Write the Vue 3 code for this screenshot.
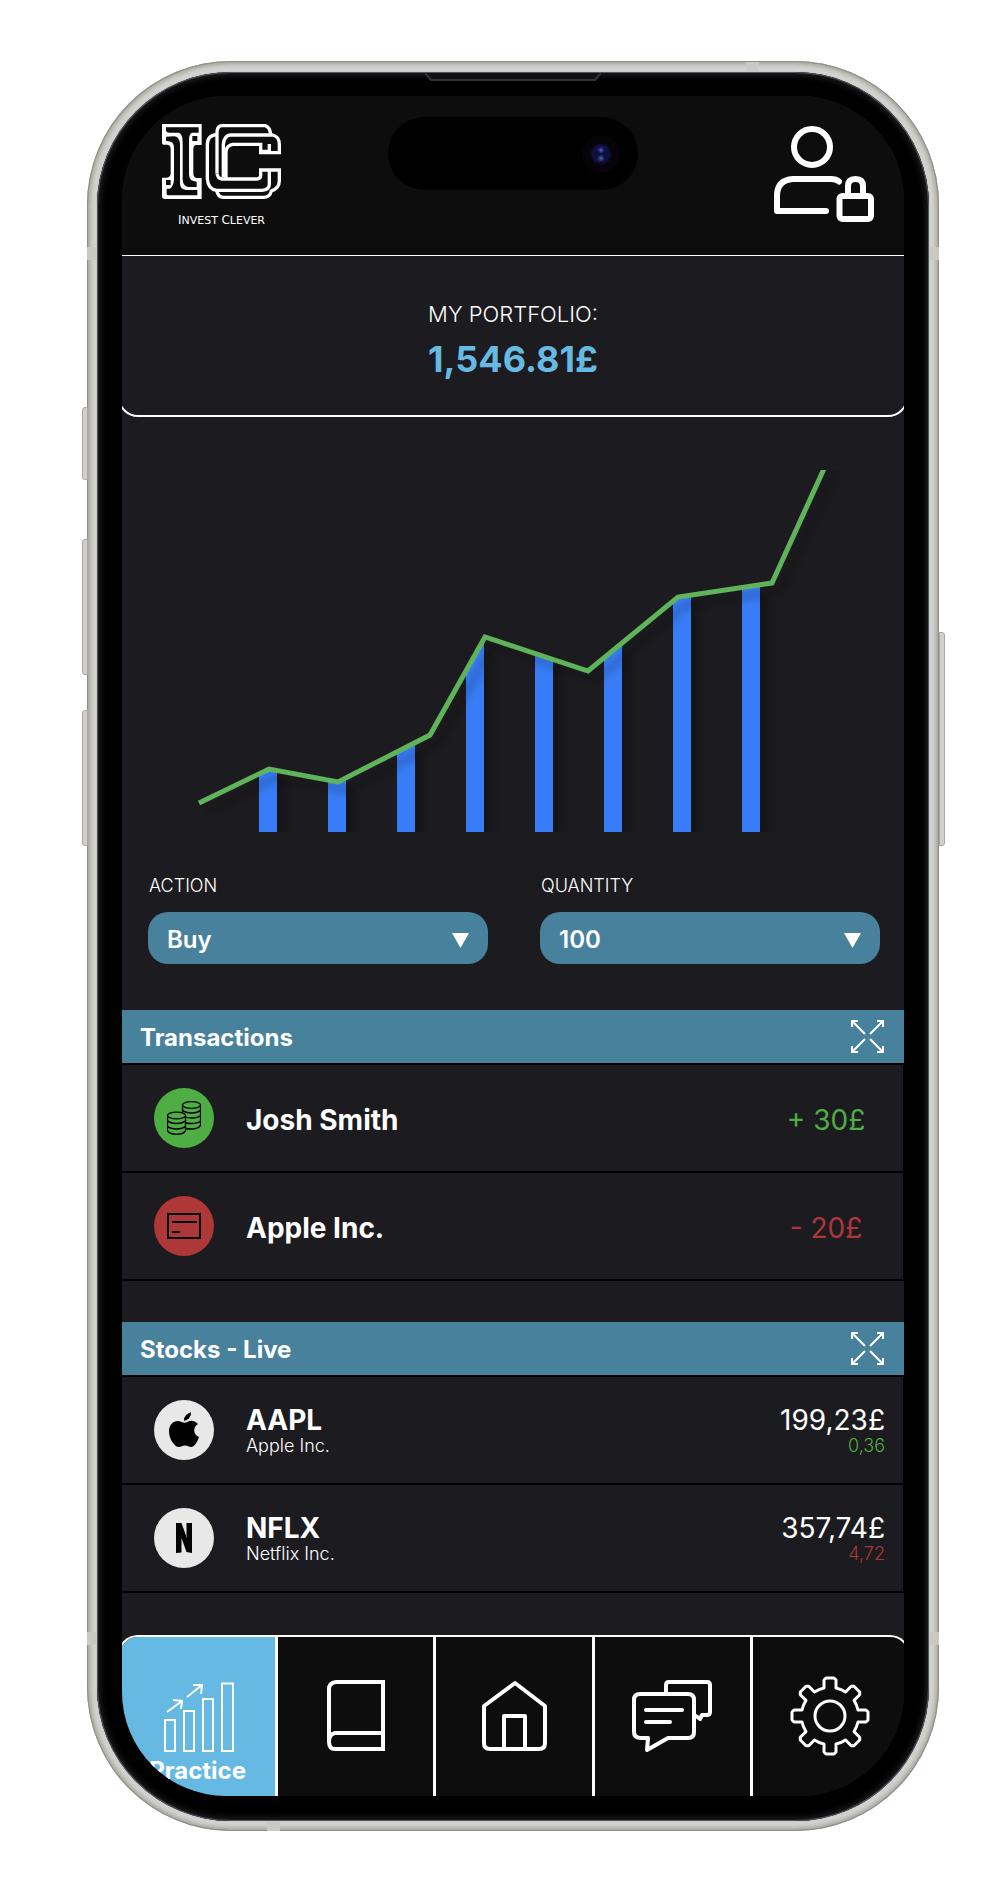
<script setup>
import { ref } from 'vue'

const action = ref('Buy')
const quantity = ref('100')
const activeTab = ref('practice')

const transactions = [
  { name: 'Josh Smith', amount: '+ 30£', kind: 'gain', icon: 'coins' },
  { name: 'Apple Inc.', amount: '- 20£', kind: 'loss', icon: 'card' },
]

const stocks = [
  { symbol: 'AAPL', company: 'Apple Inc.', price: '199,23£', change: '0,36', kind: 'gain' },
  { symbol: 'NFLX', company: 'Netflix Inc.', price: '357,74£', change: '4,72', kind: 'loss' },
]

const tabs = [
  { id: 'practice', label: 'Practice' },
  { id: 'learn', label: 'Learn' },
  { id: 'home', label: 'Home' },
  { id: 'chat', label: 'Chat' },
  { id: 'settings', label: 'Settings' },
]

const trend = [[77, 333], [147, 299], [216, 312], [308, 265], [363, 167], [466, 201], [556, 127], [650, 113], [706, -10]]
const trendPoints = trend.map((p) => p.join(',')).join(' ')
const areaPoints = `${trendPoints} 706,362 77,362`
const bars = Array.from({ length: 8 }, (_, i) => 137 + i * 69)

// Eight-toothed cog: each tooth is rotated around the centre of an 80 unit box
function cogPath() {
  const tooth = [[-6, -28], [-6, -36], [-4, -38], [4, -38], [6, -36], [6, -28]]
  let d = ''
  for (let k = 0; k < 8; k++) {
    const a = (k * Math.PI) / 4
    tooth.forEach(([x, y], i) => {
      const px = (40 + x * Math.cos(a) - y * Math.sin(a)).toFixed(1)
      const py = (40 + x * Math.sin(a) + y * Math.cos(a)).toFixed(1)
      if (k === 0 && i === 0) d += `M${px} ${py}`
      else if (i === 0) d += `A29 29 0 0 1 ${px} ${py}`
      else d += `L${px} ${py}`
    })
  }
  return d + 'A29 29 0 0 1 34 12Z'
}
const cog = cogPath()
</script>

<template>
  <div class="page">
    <div class="phone">
      <span class="side-key key-mute"></span>
      <span class="side-key key-up"></span>
      <span class="side-key key-down"></span>
      <span class="side-key key-power"></span>
      <span class="band band-left-top"></span>
      <span class="band band-right-top"></span>
      <span class="band band-left-bottom"></span>
      <span class="band band-right-bottom"></span>
      <span class="band band-top"></span>
      <span class="band band-bottom"></span>

      <div class="bezel">
        <svg class="speaker" viewBox="0 0 176 9" aria-hidden="true">
          <path d="M0 0 L6 7 H170 L176 0Z" fill="#101010" />
          <path d="M0 0 L6 7 H170 L176 0" fill="none" stroke="#333" stroke-width="2" />
        </svg>
        <div class="screen">
          <div class="island"><span class="camera"></span></div>

          <header class="top-bar">
            <a class="brand" href="#">
              <svg class="brand-mark" viewBox="36 42 357 225" aria-hidden="true">
                <path fill="#fff" fill-rule="evenodd" d="M36 42H155V105H138Q130 106 130 118V190Q130 203 140 204H155V267H44Q36 266 36 258V203H50Q62 202 62 190V118Q62 105 52 104H40Q36 103 36 98Z M48 52V62Q50 68 58 68H86Q98 72 98 95V210Q100 230 116 231H140V215Q118 214 117 195V90Q117 70 126 68H146V52Z M48 80V93Q72 92 72 112V205Q72 228 60 236H50V252Q50 256 56 256H142V240H108Q91 238 90 222V102Q88 80 72 79Z M127 78H142V93H127Z M48 210H62V225H48Z" />
                <g fill="none" stroke="#fff" stroke-width="10">
                  <path d="M201 190V64Q202 48 216 47H346Q360 52 362 74" />
                  <path d="M200 74Q172 76 172 104V206Q174 238 200 241H336Q358 240 358 222V180" />
                  <path d="M200 241Q204 262 220 262H340Q360 262 364 243Q388 234 388 212V180H332V196Q332 207 320 207H216Q203 206 201 190" />
                  <path d="M220 202V104Q222 76 242 75H368Q388 80 388 102V128H332V103H248Q230 106 228 124V206" />
                  <path d="M332 124H358V102" />
                </g>
              </svg>
              <span class="brand-name"><span class="cap">I</span>nvest <span class="cap">C</span>lever</span>
            </a>
            <button class="icon-button" type="button" aria-label="Account security">
              <svg class="user-icon" viewBox="0 0 100 96" fill="none" stroke="#fff" stroke-width="6" stroke-linecap="round" stroke-linejoin="round">
                <circle cx="38" cy="21" r="18" />
                <path d="M65 55.500Q62 53 57 53H19Q3 54 3 70V85H52" />
                <rect x="65.500" y="70" width="31.500" height="23" rx="3" />
                <path d="M74 69V60Q74 53 81.500 53T89 60V69" />
              </svg>
            </button>
          </header>

          <section class="portfolio">
            <h1 class="portfolio-title">MY PORTFOLIO:</h1>
            <p class="portfolio-value">1,546.81£</p>
          </section>

          <svg class="chart" viewBox="0 0 782 362" role="img" aria-label="Portfolio growth">
            <defs>
              <clipPath id="under-trend"><polygon :points="areaPoints" /></clipPath>
              <filter id="chart-shadow" filterUnits="userSpaceOnUse" x="0" y="-20" width="782" height="400">
                <feDropShadow dx="8" dy="8" stdDeviation="5" flood-color="#000" flood-opacity="0.3" />
              </filter>
            </defs>
            <g filter="url(#chart-shadow)">
              <g clip-path="url(#under-trend)">
                <rect v-for="x in bars" :key="x" :x="x" y="0" width="18" height="362" fill="#377df7" />
              </g>
            </g>
            <polyline :points="trendPoints" fill="none" stroke="#5fb35a" stroke-width="5" filter="url(#chart-shadow)" />
          </svg>

          <form class="order" @submit.prevent>
            <div class="field">
              <label for="action">ACTION</label>
              <div class="select-box">
                <select id="action" v-model="action">
                  <option>Buy</option>
                  <option>Sell</option>
                </select>
                <svg class="caret" viewBox="0 0 17 15" aria-hidden="true"><path d="M0 0H17L8.500 15Z" fill="#fff" /></svg>
              </div>
            </div>
            <div class="field">
              <label for="quantity">QUANTITY</label>
              <div class="select-box">
                <select id="quantity" v-model="quantity">
                  <option>100</option>
                  <option>200</option>
                </select>
                <svg class="caret" viewBox="0 0 17 15" aria-hidden="true"><path d="M0 0H17L8.500 15Z" fill="#fff" /></svg>
              </div>
            </div>
          </form>

          <section class="panel">
            <div class="panel-head">
              <h2>Transactions</h2>
              <button class="icon-button" type="button" aria-label="Expand transactions">
                <svg class="expand" viewBox="0 0 33 33" fill="none" stroke="#fff" stroke-width="2">
                  <path d="M1 7V1H7M1 1L14 14M26 1H32V7M32 1L19 14M1 26V32H7M1 32L14 19M26 32H32V26M32 32L19 19" />
                </svg>
              </button>
            </div>
            <ul>
              <li v-for="t in transactions" :key="t.name" class="row">
                <span class="badge" :class="t.kind">
                  <svg v-if="t.icon === 'coins'" width="34" height="34" viewBox="0 0 34 34" fill="none" stroke="#000" stroke-width="1.300">
                    <ellipse cx="24.500" cy="4" rx="9" ry="3.300" />
                    <path d="M15.500 4V12M33.500 4V24.500Q31 28 24.500 28Q21 28 19 27.500M15.500 9Q18 12 24.500 12T33.500 9M18 16Q20 17 24.500 17Q31 17 33.500 14.500M19 22Q21 22.500 24.500 22.500Q31 22.500 33.500 20" />
                    <ellipse cx="9.500" cy="14.500" rx="9" ry="3.300" />
                    <path d="M.5 14.500V30Q3 33.300 9.500 33.300T18.500 30V14.500M.5 19.500Q3 22.500 9.500 22.500T18.500 19.500M.5 25Q3 28 9.500 28T18.500 25" />
                  </svg>
                  <svg v-else width="36" height="26" viewBox="0 0 36 26" fill="none" stroke="#000" stroke-width="2">
                    <path d="M2 1H34V25H2ZM6 9H31M6 19H14" />
                  </svg>
                </span>
                <span class="name">{{ t.name }}</span>
                <span class="amount" :class="t.kind">{{ t.amount }}</span>
              </li>
            </ul>
          </section>

          <section class="panel">
            <div class="panel-head">
              <h2>Stocks - Live</h2>
              <button class="icon-button" type="button" aria-label="Expand stocks">
                <svg class="expand" viewBox="0 0 33 33" fill="none" stroke="#fff" stroke-width="2">
                  <path d="M1 7V1H7M1 1L14 14M26 1H32V7M32 1L19 14M1 26V32H7M1 32L14 19M26 32H32V26M32 32L19 19" />
                </svg>
              </button>
            </div>
            <ul>
              <li v-for="s in stocks" :key="s.symbol" class="row">
                <span class="badge">
                  <svg v-if="s.symbol === 'AAPL'" width="30" height="36" viewBox="0 0 30 36" fill="#000">
                    <path d="M22 .2Q22.500 3.500 20 6.200T15 8.600Q14.800 5.400 17.200 3T22 .2Z" />
                    <path d="M29 12C26.500 13.500 25.200 15.600 25.200 18.300C25.200 21.500 27.200 24 30 25C28.600 29 25.800 35 22 35C19.500 35 19 33.500 16 33.500S12.300 35 10 35C5.500 35 0 27 0 19.500C0 12.800 4.300 9 8.700 9C11.600 9 13.700 10.800 15.600 10.800C17.400 10.800 19.700 8.800 23 8.800Q26.800 9 29 12Z" />
                  </svg>
                  <svg v-else width="16" height="30" viewBox="0 0 16 30" fill="#000">
                    <path d="M0 0H5.500L10.500 14V0H16V30L10.500 29L5.500 15V29.400L0 30Z" />
                  </svg>
                </span>
                <span class="pair">
                  <strong>{{ s.symbol }}</strong>
                  <small>{{ s.company }}</small>
                </span>
                <span class="pair pair-end">
                  <span class="price">{{ s.price }}</span>
                  <small :class="s.kind">{{ s.change }}</small>
                </span>
              </li>
            </ul>
          </section>

          <nav class="tabs">
            <button
              v-for="tab in tabs"
              :key="tab.id"
              class="tab"
              :class="{ active: tab.id === activeTab }"
              type="button"
              :aria-label="tab.label"
              @click="activeTab = tab.id"
            >
              <svg class="tab-icon" viewBox="0 0 80 80" fill="none" stroke="#fff" stroke-width="4">
                <g v-if="tab.id === 'practice'" stroke-width="2">
                  <path d="M7 44H17V75H7ZM26 35H36V75H26ZM45 23H55V75H45ZM64 7.500H75V75H64Z" />
                  <path d="M9 36L24 25M15 24L24 25L23 33M29 21L44 9M35 9L44 9L43 18" />
                </g>
                <path v-else-if="tab.id === 'learn'" d="M67 57H19Q13 58 13 65.500T19 73H67V6H20Q13 7 13 13V65" />
                <path v-else-if="tab.id === 'home'" stroke-linejoin="round" d="M10 30L41 7L71 30V67Q71 73 65 73H16Q10 73 10 67ZM30 73V40H51V73" />
                <g v-else-if="tab.id === 'chat'" stroke-linejoin="round" stroke-linecap="round">
                  <path d="M8 18H56Q62 18 62 24V56Q62 62 56 62H36L15 74L16 62H9Q2 62 2 56V24Q2 18 8 18Z" />
                  <path d="M34 17V9Q34 6 37 6H75Q78 6 78 9V36Q78 39 75 39H70L68 43L64 40M14 34H50M14 46H38" />
                </g>
                <g v-else stroke-width="3" stroke-linejoin="round">
                  <circle cx="40" cy="40" r="15" />
                  <path :d="cog" />
                </g>
              </svg>
              <span v-if="tab.id === activeTab" class="tab-label">{{ tab.label }}</span>
            </button>
          </nav>
        </div>
      </div>
    </div>
  </div>
</template>

<style>
body {
  margin: 0;
  background: #fff;
}
</style>

<style scoped>
* {
  box-sizing: border-box;
}

.page {
  padding: 61px 69px 69px 87px;
  font-family: Inter, "Liberation Sans", sans-serif;
  color: #fff;
}

h1,
h2,
p,
ul {
  margin: 0;
  padding: 0;
}

ul {
  list-style: none;
}

.phone {
  position: relative;
  padding: 11px 10px 10px;
  border-radius: 144px;
  background: #d2d2ce;
  box-shadow:
    inset 0 0 0 1px #8f8d87,
    inset 0 0 4px 3px #a3a19b;
}

.side-key {
  position: absolute;
  width: 6px;
  border: 1px solid #aaa8a2;
  background: #d3d0c9;
  left: -5px;
  border-radius: 3px 0 0 3px;
}

.key-mute {
  top: 346px;
  height: 73px;
}

.key-up {
  top: 478px;
  height: 136px;
}

.key-down {
  top: 649px;
  height: 136px;
}

.key-power {
  top: 571px;
  height: 214px;
  left: auto;
  right: -6px;
  border-radius: 0 3px 3px 0;
}

.band {
  position: absolute;
  background: #c9c8c2;
}

.band-left-top,
.band-right-top,
.band-left-bottom,
.band-right-bottom {
  width: 10px;
  height: 13px;
}

.band-left-top {
  left: 0;
  top: 186px;
}

.band-right-top {
  right: 0;
  top: 186px;
}

.band-left-bottom {
  left: 0;
  bottom: 186px;
}

.band-right-bottom {
  right: 0;
  bottom: 186px;
}

.band-top,
.band-bottom {
  width: 13px;
  height: 10px;
}

.band-top {
  top: 1px;
  right: 180px;
}

.band-bottom {
  bottom: 0;
  left: 180px;
}

.bezel {
  position: relative;
  padding: 24px 25px 25px;
  border-radius: 134px;
  background: #000;
  box-shadow:
    0 0 0 1px #c3cad4,
    inset 0 0 0 1px #55565a,
    inset 0 0 6px 3px #222223;
}

.speaker {
  position: absolute;
  top: 1px;
  left: 50%;
  width: 176px;
  height: 9px;
  margin-left: -88px;
}

.screen {
  position: relative;
  overflow: hidden;
  border-radius: 104px;
  background: #1c1b1f;
}

.island {
  position: absolute;
  top: 21px;
  left: 50%;
  display: flex;
  align-items: center;
  justify-content: flex-end;
  width: 250px;
  height: 73px;
  margin-left: -125px;
  padding-right: 18px;
  border-radius: 37px;
  background: #000;
}

.camera {
  width: 38px;
  height: 38px;
  border-radius: 50%;
  background:
    radial-gradient(circle at 50% 40%, #6a62c4 0, #2b2a7a 2px, transparent 4px),
    radial-gradient(circle at 50% 61%, #3e74a0 0, #1d3a6a 2px, transparent 4px),
    radial-gradient(circle, #0a0a30 0, #101044 8px, #0a0a20 10px, #060408 11px);
}

.top-bar {
  display: flex;
  align-items: flex-start;
  justify-content: space-between;
  height: 160px;
  padding: 28px 30px 0 40px;
  border-bottom: 1px solid #fff;
  background: #0d0d0d;
}

.brand {
  display: flex;
  flex-direction: column;
  align-items: center;
  gap: 13px;
  color: #fff;
  text-decoration: none;
}

.brand-mark {
  width: 119px;
  height: 75px;
}

.brand-name {
  font: 11px/16px "DejaVu Sans", sans-serif;
  text-transform: uppercase;
}

.brand-name .cap {
  font-size: 12px;
}

.icon-button {
  display: block;
  padding: 0;
  border: 0;
  background: none;
  cursor: pointer;
}

.icon-button svg {
  display: block;
}

.user-icon {
  width: 100px;
  height: 96px;
  margin-top: 2px;
}

.portfolio {
  margin: 0 -4px;
  padding: 44px 0 34px;
  border: 2px solid #fff;
  border-top: 0;
  border-radius: 0 0 20px 20px;
  text-align: center;
}

.portfolio-title {
  margin-bottom: 9px;
  font-size: 22px;
  font-weight: 300;
  line-height: 28px;
}

.portfolio-value {
  font-size: 36px;
  font-weight: 700;
  line-height: 44px;
  color: #66b9e2;
}

.chart {
  display: block;
  width: 100%;
  margin-top: 53px;
}

.order {
  display: flex;
  gap: 52px;
  padding: 42px 24px 46px 26px;
}

.field {
  flex: 1;
  min-width: 0;
}

.field label {
  display: block;
  margin-bottom: 14px;
  padding-left: 1px;
  font-size: 18px;
  font-weight: 300;
  line-height: 24px;
}

.select-box {
  position: relative;
}

.select-box select {
  display: block;
  width: 100%;
  height: 52px;
  padding: 4px 19px 0;
  border: 0;
  border-radius: 20px;
  appearance: none;
  background: #48819c;
  color: #fff;
  font: 600 24px/30px Inter, "Liberation Sans", sans-serif;
}

.caret {
  position: absolute;
  top: 21px;
  right: 19px;
  width: 17px;
  height: 15px;
  pointer-events: none;
}

.panel {
  margin-bottom: 41px;
}

.panel-head {
  display: flex;
  align-items: center;
  justify-content: space-between;
  height: 55px;
  padding: 0 20px 0 18px;
  border-bottom: 2px solid #000;
  background: #48819c;
}

.panel-head h2 {
  padding-top: 2px;
  font-size: 24px;
  font-weight: 700;
  line-height: 30px;
}

.expand {
  width: 33px;
  height: 33px;
}

.row {
  display: flex;
  align-items: center;
  height: 108px;
  padding: 0 18px 0 32px;
  border-right: 1px solid #000;
  border-bottom: 2px solid #000;
}

.badge {
  display: flex;
  align-items: center;
  justify-content: center;
  width: 60px;
  height: 60px;
  margin-right: 32px;
  border-radius: 50%;
  background: #e8e8e8;
}

.badge.gain {
  background: #4fae43;
}

.badge.loss {
  background: #ae3737;
}

.name,
.amount {
  padding-top: 4px;
  font-size: 28px;
  line-height: 34px;
}

.name {
  flex: 1;
  font-weight: 700;
}

.amount {
  width: 118px;
  text-align: center;
  font-weight: 400;
}

.amount.gain,
small.gain {
  color: #4fae43;
}

.amount.loss,
small.loss {
  color: #ae3737;
}

.pair {
  display: flex;
  flex: 1;
  flex-direction: column;
  padding-top: 2px;
}

.pair-end {
  align-items: flex-end;
}

.pair strong,
.price {
  font-size: 28px;
  line-height: 30px;
}

.pair strong {
  font-weight: 700;
}

.price {
  font-weight: 400;
}

.pair small {
  font-size: 18px;
  font-weight: 300;
  line-height: 22px;
}

.tabs {
  display: flex;
  margin: 42px -6px 0 -4px;
  overflow: hidden;
  border: 2px solid #fff;
  border-bottom: 0;
  border-radius: 20px 20px 0 0;
  background: #0d0d0d;
}

.tab {
  display: flex;
  flex: 1 1 0;
  flex-direction: column;
  align-items: center;
  height: 159px;
  padding: 39px 0 0;
  border: 0;
  background: none;
  color: #fff;
  font: 700 24px/30px Inter, "Liberation Sans", sans-serif;
  cursor: pointer;
}

.tab + .tab {
  border-left: 3px solid #fff;
}

.tab.active {
  background: #66b9e2;
}

.tab-icon {
  display: block;
  flex: none;
  width: 80px;
  height: 80px;
}
</style>
